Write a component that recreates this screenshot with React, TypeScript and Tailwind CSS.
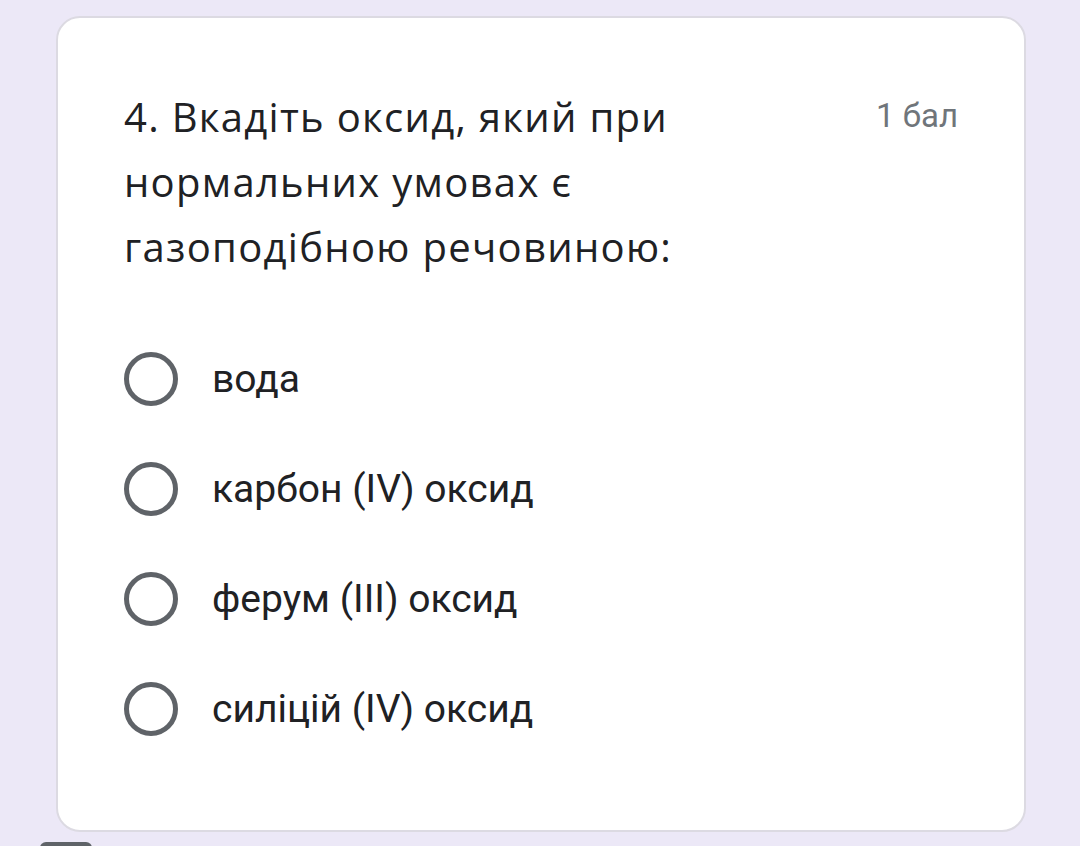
import React from "react";

const options = ["вода", "карбон (IV) оксид", "ферум (III) оксид", "силіцій (IV) оксид"];

const App: React.FC = () => {
  return (
    <div className="relative w-[1080px] h-[846px] overflow-hidden bg-[#ece8f7] pt-[16px] pl-[56px]">
      <div className="w-[970px] h-[816px] bg-white rounded-[24px] border-2 border-[#dcdae2] px-[66px] pt-[66px]">
        {/* question header */}
        <div className="flex justify-between items-start">
          <h2
            className="w-[620px] text-[40px] leading-[65px] text-[#202124] tracking-[1.3px]"
            style={{ fontFamily: "'Open Sans', sans-serif" }}
          >
            4. Вкадіть оксид, який при нормальних умовах є газоподібною речовиною:
          </h2>
          <span
            className="mt-[12px] text-[33px] leading-[40px] text-[#70757a]"
            style={{ fontFamily: "Roboto, sans-serif" }}
          >
            1 бал
          </span>
        </div>

        {/* options */}
        <div className="mt-[73px] flex flex-col gap-[56px]">
          {options.map((o) => (
            <label key={o} className="flex items-center gap-[34px]">
              <span className="w-[54px] h-[54px] rounded-full border-[5px] border-[#5f6368] shrink-0" />
              <span
                className="text-[39px] leading-[54px] text-[#202124]"
                style={{ fontFamily: "Roboto, sans-serif" }}
              >
                {o}
              </span>
            </label>
          ))}
        </div>
      </div>
      <div className="absolute left-[40px] top-[842px] w-[52px] h-[12px] rounded-t-[6px] bg-[#5f6368]" />
    </div>
  );
};

export default App;
